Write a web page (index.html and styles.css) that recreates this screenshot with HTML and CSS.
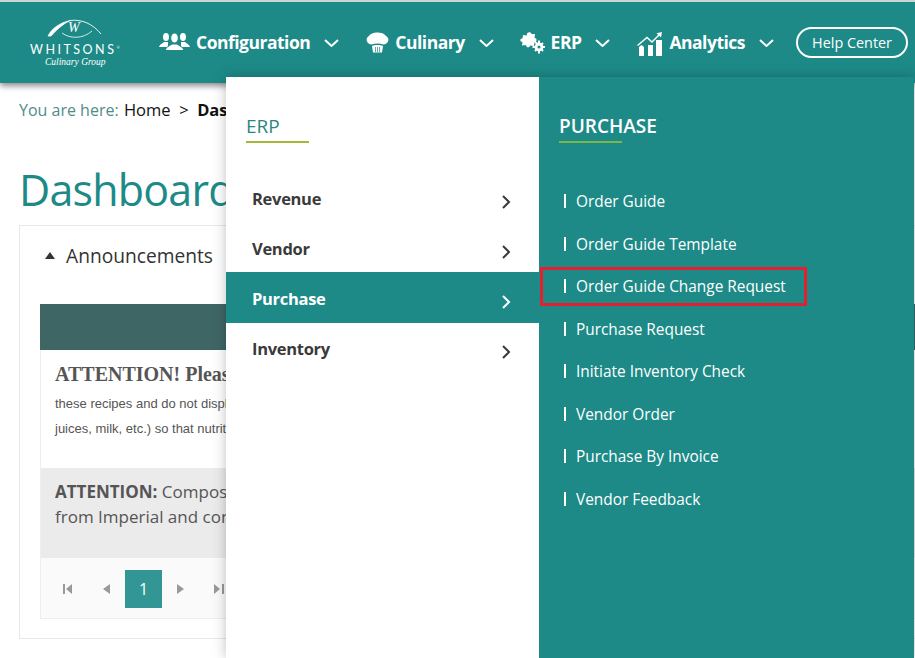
FILE: index.html
```html
<!DOCTYPE html>
<html lang="en">
<head>
  <meta charset="UTF-8" />
  <title>Dashboard</title>
  <link rel="stylesheet" href="styles.css">
</head>
<body>
  <header class="topbar">
    <div class="logo">
      <svg class="logo-arc" width="58" height="25" viewBox="0 0 58 25" fill="none" stroke="#fff">
        <path d="M25 1.5 C37 0 48 5 56 15" stroke-width="0.9"/>
        <path d="M3 17 C7 9 15 4 25 1.5 C18 5 12 10 6 17Z" fill="#fff" stroke-width="0.8"/>
        <path d="M17 14 C25 20 38 20 47 12" stroke-width="0.8"/>
        <text x="23" y="13" class="logo-w">W</text>
      </svg>
      <div class="logo-name">WHITSONS<sup>®</sup></div>
      <div class="logo-sub">Culinary Group</div>
    </div>
    <nav class="nav">
      <a class="nav-item nav-config">
        <svg width="31" height="20" viewBox="0 0 31 20" fill="#fff">
          <ellipse cx="7" cy="5" rx="3" ry="4"/><path d="M0 15 L1 13 L5 10 L9 10 L9 15Z"/>
          <ellipse cx="24" cy="5" rx="3" ry="4"/><path d="M31 15 L30 13 L26 10 L22 10 L22 15Z"/>
          <ellipse cx="15.5" cy="6" rx="3.8" ry="5" stroke="#1d8a87"/><path d="M6 18.5 L7.5 15.5 L13 12 L18 12 L23.5 15.5 L25 18.5Z" stroke="#1d8a87"/>
        </svg>
        <span>Configuration</span>
        <svg class="caret" width="15" height="8" viewBox="0 0 15 8"><path d="M1 1 L7.5 7 L14 1" /></svg>
      </a>
      <a class="nav-item nav-culinary">
        <svg width="23" height="22" viewBox="0 0 23 22" fill="#fff">
          <path d="M5.5 13.5 C0 13 -1 7 3 5 C5 0.5 17 0 20 5 C24 7 23 13 17.5 13.5 C14 12 9 12 5.5 13.5Z"/>
          <path d="M6 15 C9 13.6 14 13.6 17 15 L16 21.5 H7Z"/>
          <path d="M9.5 16 V21 M11.5 16 V21 M13.5 16 V21" stroke="#1d8a87" stroke-width="0.7"/>
        </svg>
        <span>Culinary</span>
        <svg class="caret" width="15" height="8" viewBox="0 0 15 8"><path d="M1 1 L7.5 7 L14 1" /></svg>
      </a>
      <a class="nav-item nav-erp">
        <svg width="25" height="23" viewBox="0 0 25 23" fill="#fff">
          <path d="M3 4 L7 4.5 C6 1 11 0 11.5 3 L15 3 L14.5 7 C17.5 7 17 11 14.5 11 L14 15 L10 14.5 C10 17 6 17 6 14 L2 14.5 L2.5 11 C-0.5 11 -0.5 7 2.5 7.5Z"/>
          <circle cx="19" cy="16" r="4.4"/>
          <path d="M18 9.5 H20 V22.5 H18Z M12.5 15 H25 V17 H12.5Z M14.3 11.3 L15.7 9.9 L23.7 19.3 L22.3 20.7Z M23.7 12.7 L22.3 11.3 L14.3 19.3 L15.7 20.7Z"/>
          <circle cx="19" cy="16" r="1.5" fill="#1d8a87"/>
        </svg>
        <span>ERP</span>
        <svg class="caret" width="15" height="8" viewBox="0 0 15 8"><path d="M1 1 L7.5 7 L14 1" /></svg>
      </a>
      <a class="nav-item nav-analytics">
        <svg class="ana-icon" width="26" height="24" viewBox="0 0 26 24" fill="#fff">
          <path d="M2 24 V15 L4.5 13 L7 15 V24Z"/>
          <rect x="11" y="13" width="5" height="11"/>
          <rect x="19" y="8" width="6" height="16"/>
          <path d="M0.5 13.5 L10 5.5 L15 10 L23 2" fill="none" stroke="#fff" stroke-width="1.5"/>
          <path d="M19.5 1.2 L25 0 L24 5.5Z"/>
        </svg>
        <span>Analytics</span>
        <svg class="caret" width="15" height="8" viewBox="0 0 15 8"><path d="M1 1 L7.5 7 L14 1" /></svg>
      </a>
      <a class="help-btn">Help Center</a>
    </nav>
  </header>

  <main class="content">
    <div class="crumbs"><span class="crumb-lead">You are here:</span> Home &nbsp;&gt;&nbsp; <b>Dashboard</b></div>
    <h1 class="page-title">Dashboard</h1>
    <section class="panel">
      <div class="panel-head"><span class="tri"></span>Announcements</div>
      <div class="grid-box">
        <div class="grid-head"></div>
        <div class="row-white">
          <div class="notice-title">ATTENTION! Please</div>
          <p class="notice-text">these recipes and do not display</p>
          <p class="notice-text">juices, milk, etc.) so that nutrition</p>
        </div>
        <div class="row-grey"><b>ATTENTION:</b> Composite<br>from Imperial and conv</div>
        <div class="pager">
          <svg class="pg pg-first" width="10" height="10" viewBox="0 0 10 10"><path d="M0 0H2V10H0Z M9 0V10L3 5Z"/></svg>
          <svg class="pg pg-prev" width="8" height="10" viewBox="0 0 8 10"><path d="M8 0V10L1 5Z"/></svg>
          <span class="pg-current">1</span>
          <svg class="pg pg-next" width="8" height="10" viewBox="0 0 8 10"><path d="M0 0V10L7 5Z"/></svg>
          <svg class="pg pg-last" width="10" height="10" viewBox="0 0 10 10"><path d="M0 0V10L6 5Z M8 0H10V10H8Z"/></svg>
        </div>
      </div>
    </section>
  </main>

  <div class="mega">
    <div class="mega-left">
      <h2 class="mega-title">ERP</h2>
      <ul class="side-list">
        <li class="side-item">Revenue<svg class="chev" width="9" height="14" viewBox="0 0 9 14"><path d="M1 1 L7 7 L1 13"/></svg></li>
        <li class="side-item">Vendor<svg class="chev" width="9" height="14" viewBox="0 0 9 14"><path d="M1 1 L7 7 L1 13"/></svg></li>
        <li class="side-item active">Purchase<svg class="chev" width="9" height="14" viewBox="0 0 9 14"><path d="M1 1 L7 7 L1 13"/></svg></li>
        <li class="side-item">Inventory<svg class="chev" width="9" height="14" viewBox="0 0 9 14"><path d="M1 1 L7 7 L1 13"/></svg></li>
      </ul>
    </div>
    <div class="mega-right">
      <h2 class="mega-title">PURCHASE</h2>
      <ul class="link-list">
        <li class="link-item">Order Guide</li>
        <li class="link-item">Order Guide Template</li>
        <li class="link-item boxed">Order Guide Change Request</li>
        <li class="link-item">Purchase Request</li>
        <li class="link-item">Initiate Inventory Check</li>
        <li class="link-item">Vendor Order</li>
        <li class="link-item">Purchase By Invoice</li>
        <li class="link-item">Vendor Feedback</li>
      </ul>
    </div>
  </div>
</body>
</html>
```
FILE: styles.css
```css
* {
  box-sizing: border-box;
}

html, body {
  height: 658px;
  overflow: hidden;
}

body {
  margin: 0;
  position: relative;
  background: #fff;
  font-family: "Open Sans", sans-serif;
  color: #333;
  border-top: 2px solid #c9d6d5;
}

.topbar {
  height: 81px;
  background: #1d8a87;
  box-shadow: 0 3px 6px rgba(0, 0, 0, 0.45);
  display: flex;
  align-items: center;
  position: relative;
}

.logo {
  width: 159px;
  padding: 1px 0 0 30px;
  color: #fff;
}

.logo-arc {
  display: block;
  margin-left: 15px;
}

.logo-w {
  font-family: "Liberation Serif", serif;
  font-style: italic;
  font-size: 14px;
  fill: #fff;
  stroke: none;
}

.logo-name {
  font-family: "Lato", sans-serif;
  font-size: 12.5px;
  letter-spacing: 2.5px;
  line-height: 12px;
  white-space: nowrap;
}

.logo-name sup {
  font-size: 4px;
  letter-spacing: 0;
  line-height: 0;
}

.logo-sub {
  font-family: "Liberation Serif", serif;
  font-style: italic;
  font-size: 9.5px;
  line-height: 11px;
  margin: 1px 0 0 15px;
  white-space: nowrap;
}

.nav {
  display: flex;
  align-items: center;
  height: 100%;
  padding-bottom: 1px;
}

.nav-item {
  display: flex;
  align-items: center;
  color: #fff;
  font-size: 17.5px;
  font-weight: 700;
  letter-spacing: -0.5px;
}

.nav-item span {
  margin-left: 6px;
}

.caret {
  margin-left: 14px;
  margin-top: 2px;
  fill: none;
  stroke: #fff;
  stroke-width: 2;
}

.ana-icon {
  margin-top: 3px;
}

.nav-config { margin-right: 27px; }
.nav-culinary { margin-right: 26px; }
.nav-erp { margin-right: 27px; }
.nav-analytics { margin-right: 22px; }

.help-btn {
  width: 112px;
  height: 31px;
  border: 2px solid #fff;
  border-radius: 16px;
  color: #fff;
  font-size: 14.4px;
  display: flex;
  align-items: center;
  justify-content: center;
}

.content {
  padding: 19px 0 0 19px;
}

.crumbs {
  font-size: 16.5px;
  line-height: 16px;
  color: #111;
  white-space: nowrap;
}

.crumb-lead {
  color: #4f8c8a;
  font-size: 16px;
  margin-right: 1px;
}

.page-title {
  margin: 41px 0 0;
  font-size: 43px;
  line-height: 62px;
  font-weight: 400;
  letter-spacing: -0.8px;
  color: #1d8a87;
}

.panel {
  width: 900px;
  height: 414px;
  margin-top: 4px;
  border: 1px solid #e8e8e8;
  padding: 0 0 0 20px;
}

.panel-head {
  height: 78px;
  display: flex;
  align-items: center;
  padding: 0 0 20px 5px;
  font-size: 19.2px;
  font-weight: 500;
  color: #333;
}

.tri {
  width: 0;
  height: 0;
  border: 5px solid transparent;
  border-top: 0;
  border-bottom: 7px solid #333;
  margin-right: 11px;
}

.grid-box {
  border: 1px solid #eee;
  border-top: 0;
}

.grid-head {
  height: 46px;
  margin: 0 -1px;
  background: #3e6665;
}

.row-white {
  height: 118px;
  padding: 13px 14px 0;
}

.notice-title {
  font-family: "Liberation Serif", serif;
  font-size: 20px;
  line-height: 23px;
  font-weight: 700;
  color: #555;
  white-space: nowrap;
}

.notice-text {
  margin: 10px 0 0;
  font-family: "Liberation Sans", sans-serif;
  font-size: 13px;
  line-height: 15px;
  color: #555;
  white-space: nowrap;
}

.row-grey {
  height: 90px;
  padding: 11px 14px 0;
  background: #ebebeb;
  font-size: 17px;
  line-height: 25px;
  color: #555;
  white-space: nowrap;
}

.pager {
  height: 60px;
  padding-top: 2px;
  background: #fafafa;
  display: flex;
  align-items: center;
}

.pg {
  fill: #999;
}

.pg-first { margin-left: 22px; }
.pg-prev { margin-left: 29px; }
.pg-next { margin-left: 15px; }
.pg-last { margin-left: 29px; }

.pg-current {
  width: 37px;
  height: 38px;
  margin-left: 15px;
  background: #329794;
  color: #fff;
  font-size: 16px;
  display: flex;
  align-items: center;
  justify-content: center;
}

.mega {
  position: absolute;
  left: 226px;
  top: 75px;
  width: 688px;
  height: 581px;
  display: flex;
  box-shadow: 0 0 12px rgba(0, 0, 0, 0.25);
}

.mega-left {
  width: 313px;
  background: #fff;
}

.mega-right {
  flex: 1;
  background: #1d8a87;
  color: #fff;
}

.mega-title {
  margin: 41px 0 0 20px;
  width: 63px;
  height: 25px;
  border-bottom: 2px solid #a4b93a;
  font-size: 19px;
  line-height: 16px;
  font-weight: 400;
  color: #2d8583;
  white-space: nowrap;
}

.mega-right .mega-title {
  color: #fff;
  font-weight: 600;
  border-bottom-color: #7ab648;
}

.side-list,
.link-list {
  list-style: none;
  margin: 0;
  padding: 0;
}

.side-list {
  margin-top: 29px;
}

.side-item {
  height: 50px;
  padding: 3px 28px 0 26px;
  display: flex;
  align-items: center;
  justify-content: space-between;
  font-size: 16.5px;
  font-weight: 700;
  letter-spacing: -0.3px;
  color: #3a3a3a;
}

.side-item.active {
  background: #1d8a87;
  color: #fff;
  height: 51px;
  padding-top: 2px;
  margin-bottom: -1px;
}

.chev {
  margin-top: 7px;
  fill: none;
  stroke: currentColor;
  stroke-width: 2;
}

.link-list {
  margin-top: 38.4px;
}

.link-item {
  position: relative;
  height: 42.5px;
  padding-left: 37px;
  font-size: 15.4px;
  line-height: 42px;
  white-space: nowrap;
}

.link-item::before {
  content: "";
  position: absolute;
  left: 25px;
  top: 13px;
  width: 2px;
  height: 14px;
  background: #fff;
}

.boxed::after {
  content: "";
  position: absolute;
  left: 1px;
  top: 1px;
  width: 261px;
  height: 33px;
  border: 3px solid #e5202e;
}
```
